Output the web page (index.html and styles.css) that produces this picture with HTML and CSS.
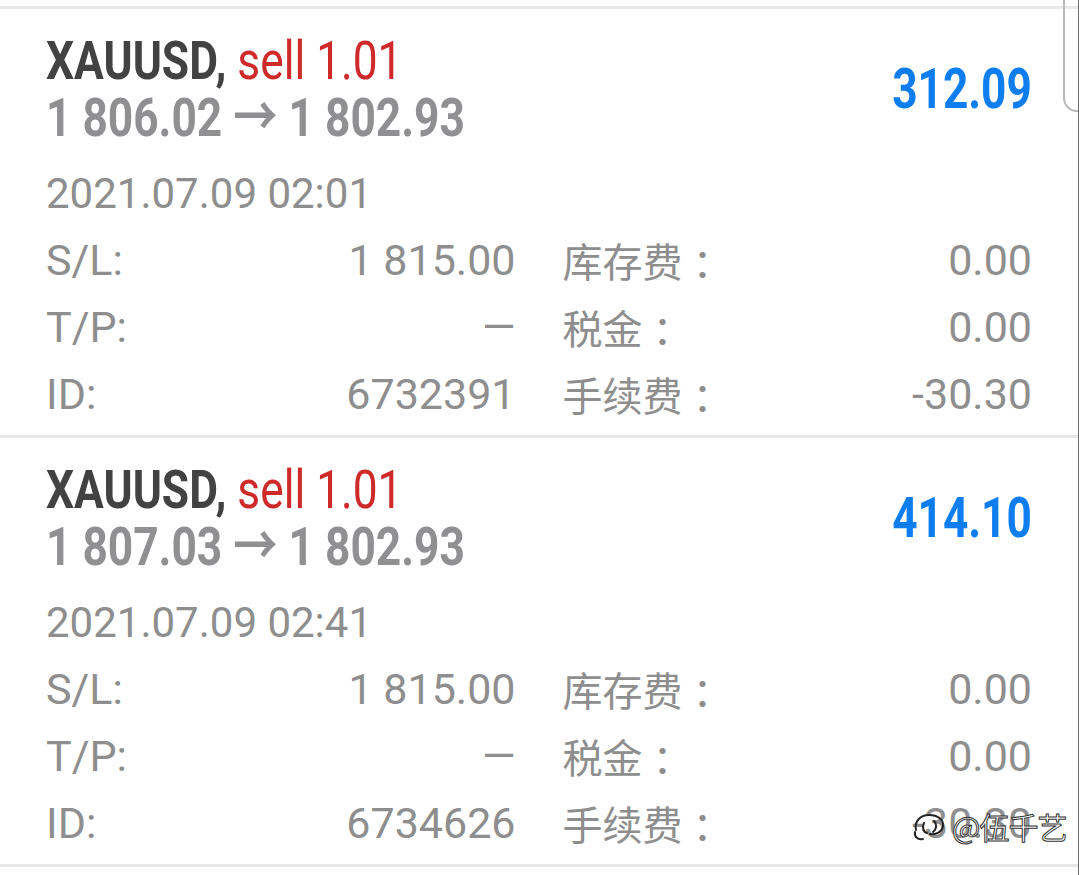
FILE: index.html
```html
<!DOCTYPE html>
<html lang="zh-CN">
<head>
    <meta charset="UTF-8">
    <meta name="viewport" content="width=device-width, initial-scale=1.0">
    <title>Positions</title>
    <link rel="stylesheet" href="styles.css">
</head>
<body>
    <div class="screen">
        <div class="orders">
            <div class="order">
                <div class="orderHead">
                    <div class="orderTitle">
                        <div class="titleLine"><span class="cond"><b class="symbol">XAUUSD,</b> <span class="side">sell 1.01</span></span></div>
                        <div class="titleLine prices"><span class="cond">1 806.02 → 1 802.93</span></div>
                    </div>
                    <div class="profit"><span class="cond">312.09</span></div>
                </div>
                <div class="orderTime">2021.07.09 02:01</div>
                <div class="orderGrid">
                    <div class="field"><span>S/L:</span><span>1 815.00</span></div>
                    <div class="field"><span class="cjk">库存费<span class="colon">：</span></span><span>0.00</span></div>
                    <div class="field"><span>T/P:</span><span>—</span></div>
                    <div class="field"><span class="cjk">税金<span class="colon">：</span></span><span>0.00</span></div>
                    <div class="field"><span>ID:</span><span>6732391</span></div>
                    <div class="field"><span class="cjk">手续费<span class="colon">：</span></span><span>-30.30</span></div>
                </div>
            </div>

            <div class="order">
                <div class="orderHead">
                    <div class="orderTitle">
                        <div class="titleLine"><span class="cond"><b class="symbol">XAUUSD,</b> <span class="side">sell 1.01</span></span></div>
                        <div class="titleLine prices"><span class="cond">1 807.03 → 1 802.93</span></div>
                    </div>
                    <div class="profit"><span class="cond">414.10</span></div>
                </div>
                <div class="orderTime">2021.07.09 02:41</div>
                <div class="orderGrid">
                    <div class="field"><span>S/L:</span><span>1 815.00</span></div>
                    <div class="field"><span class="cjk">库存费<span class="colon">：</span></span><span>0.00</span></div>
                    <div class="field"><span>T/P:</span><span>—</span></div>
                    <div class="field"><span class="cjk">税金<span class="colon">：</span></span><span>0.00</span></div>
                    <div class="field"><span>ID:</span><span>6734626</span></div>
                    <div class="field"><span class="cjk">手续费<span class="colon">：</span></span><span>-30.30</span></div>
                </div>
            </div>
        </div>

        <div class="scrollEdge"></div>

        <div class="watermark">
            <svg class="wmLogo" width="36" height="32" viewBox="0 0 36 32">
                <path d="M4 20 C2 12 8 5 17 5 C26 5 32 10 31 16 C30 22 24 25 18 24 M12 13 C10 17 11 22 15 23 M22 11 C25 14 25 19 21 22 M3 22 C2 27 6 30 11 29" fill="none" stroke="#222" stroke-width="2" stroke-linecap="round"/>
            </svg>
            <span class="wmText">@伍千艺</span>
        </div>
    </div>
</body>
</html>
```

FILE: styles.css
```css
* {
    margin: 0;
    padding: 0;
    box-sizing: border-box;
}
body {
    background-color: #fff;
    font-family: Roboto, 'Noto Sans CJK SC', sans-serif;
    color: #8e8e8e;
}
.screen {
    position: relative;
    width: 1079px;
    min-height: 875px;
    padding-top: 6px;
    border-right: 1px solid #6a6a6a;
    overflow: hidden;
}
.orders {
    border-top: 3px solid #e8e8e8;
}
.order {
    padding: 23px 46px 7px 46px;
    border-bottom: 3px solid #e8e8e8;
}
.orderHead {
    display: flex;
    align-items: center;
    justify-content: space-between;
}
.titleLine {
    height: 57px;
    font-size: 54px;
    line-height: 57px;
    white-space: nowrap;
}
.cond {
    display: inline-block;
    transform: scaleX(0.82);
    transform-origin: left center;
}
.symbol {
    font-weight: 700;
    color: #424242;
}
.side {
    color: #cf2a2a;
}
.prices {
    font-weight: 700;
    color: #909093;
}
.profit {
    font-size: 56px;
    line-height: 60px;
    font-weight: 700;
    color: #0d7df0;
    white-space: nowrap;
}
.profit .cond {
    transform: scaleX(0.79);
    transform-origin: right center;
}
.orderTime {
    margin-top: 14px;
    font-size: 42px;
    line-height: 67px;
}
.orderGrid {
    display: grid;
    grid-template-columns: 1fr 1fr;
    column-gap: 47px;
}
.field {
    display: flex;
    justify-content: space-between;
    font-size: 43px;
    line-height: 67px;
    white-space: nowrap;
}
.cjk {
    font-family: 'Noto Sans CJK SC', sans-serif;
    font-size: 40px;
}
.colon {
    margin-left: 10px;
}
.scrollEdge {
    position: absolute;
    top: 0;
    right: 0;
    width: 15px;
    height: 112px;
    border-left: 2px solid #b8b8b8;
    border-bottom: 2px solid #b8b8b8;
    border-bottom-left-radius: 14px;
}
.watermark {
    position: absolute;
    top: 804px;
    left: 912px;
    display: flex;
    align-items: center;
    gap: 4px;
}
.wmText {
    font-family: 'Noto Sans CJK SC', sans-serif;
    font-size: 30px;
    color: #fff;
    -webkit-text-stroke: 1px #333;
    letter-spacing: -1px;
}
```
